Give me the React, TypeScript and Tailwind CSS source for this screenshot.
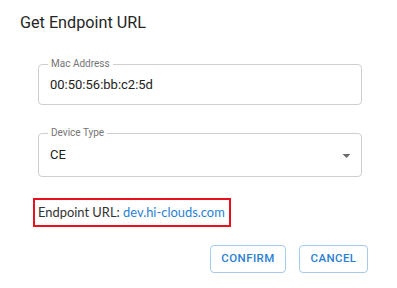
import React from 'react';

const OutlinedBox: React.FC<{ label: string; height: string; children: React.ReactNode }> = ({ label, height, children }) => {
  return (
    <div className={`relative ${height} border border-[#cfcfcf] rounded-[4px] flex items-center pl-[11px] pr-[5px]`}>
      <span className="absolute left-[9px] top-[-7px] bg-white px-[3px] text-[10px] leading-[12px] text-[#757575]">
        {label}
      </span>
      {children}
    </div>
  );
};

const ArrowDropDown = () => (
  <svg className="w-[19px] h-[19px] text-[#6b6b6b]" viewBox="0 0 24 24" fill="currentColor">
    <path d="M7 10l5 5 5-5z" />
  </svg>
);

export default function App() {
  return (
    <div className="w-[397px] h-[288px] bg-white font-['Roboto',sans-serif] overflow-hidden">
      <div className="pt-[13px] pl-[20px] text-[16.2px] leading-[20px] text-[#262626]">Get Endpoint URL</div>

      <div className="pl-[38px] pr-[35px]">
        <div className="mt-[31px]">
          <OutlinedBox label="Mac Address" height="h-[41px]">
            <span className="text-[13px] text-[#212121]">00:50:56:bb:c2:5d</span>
          </OutlinedBox>
        </div>
        <div className="mt-[28px]">
          <OutlinedBox label="Device Type" height="h-[44px]">
            <span className="flex-1 text-[13px] text-[#212121]">CE</span>
            <ArrowDropDown />
          </OutlinedBox>
        </div>
      </div>

      <div className="ml-[33px] mt-[21px] w-[198px] h-[29px] border-2 border-[#e8101c] flex items-center pl-[3px] font-['Lato',sans-serif] text-[12.9px] text-[#333] whitespace-nowrap">
        Endpoint URL:&nbsp;<span className="text-[#2a7fd4]">dev.hi-clouds.com</span>
      </div>

      <div className="mt-[18px] flex justify-end pr-[29px] gap-[13px]">
        <button className="w-[76px] h-[28px] border border-[#a6c9ec] rounded-[4px] text-[11.5px] font-medium tracking-[0.4px] text-[#2a7fd4]">
          CONFIRM
        </button>
        <button className="w-[69px] h-[28px] border border-[#a6c9ec] rounded-[4px] text-[11.5px] font-medium tracking-[0.4px] text-[#2a7fd4]">
          CANCEL
        </button>
      </div>
    </div>
  );
}
